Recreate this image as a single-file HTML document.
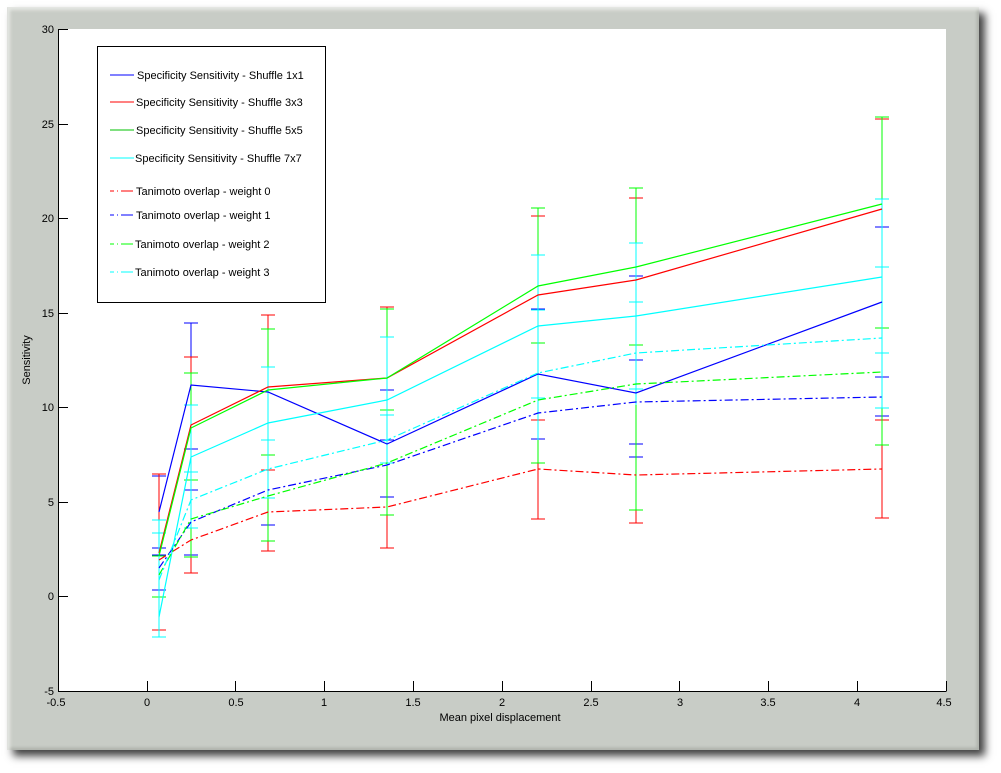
<!DOCTYPE html>
<html><head><meta charset="utf-8"><style>
body{margin:0;width:1001px;height:773px;background:#fff;overflow:hidden;position:relative;font-family:"Liberation Sans",sans-serif}
.frame{position:absolute;left:7px;top:7px;width:971px;height:742px;background:#c8ccc6;box-shadow:6px 6px 8px rgba(0,0,0,0.75),inset 2px 2px 3px #e6e8e4,inset -2px -2px 3px #a9ada7;border-top:1px solid #e4e6e2;border-left:1px solid #dfe1dd}
svg{position:absolute;left:0;top:0}
</style></head><body>
<div class="frame"></div>
<svg width="1001" height="773" font-family="Liberation Sans, sans-serif" font-size="11">
<rect x="58" y="29" width="888" height="662" fill="#fff"/>
<g stroke="#000" stroke-width="1" fill="none">
<path d="M58.5 29V691.5H946.5"/>
<path d="M58 29.5h10M58 124.5h10M58 218.5h10M58 313.5h10M58 407.5h10M58 502.5h10M58 596.5h10"/>
<path d="M58.5 691v-10M147.5 691v-10M235.5 691v-10M324.5 691v-10M413.5 691v-10M502.5 691v-10M591.5 691v-10M679.5 691v-10M768.5 691v-10M857.5 691v-10M946.5 691v-10"/>
</g>
<g text-anchor="end" fill="#000">
<text x="54" y="33">30</text><text x="54" y="128">25</text><text x="54" y="222">20</text><text x="54" y="317">15</text><text x="54" y="411">10</text><text x="54" y="506">5</text><text x="54" y="600">0</text><text x="54" y="695">-5</text>
</g>
<g text-anchor="middle" fill="#000">
<text x="56" y="706">-0.5</text><text x="147" y="706">0</text><text x="236" y="706">0.5</text><text x="324" y="706">1</text><text x="413" y="706">1.5</text><text x="502" y="706">2</text><text x="591" y="706">2.5</text><text x="680" y="706">3</text><text x="768" y="706">3.5</text><text x="857" y="706">4</text><text x="944" y="706">4.5</text>
<text x="500" y="721">Mean pixel displacement</text>
<text transform="translate(30 360) rotate(-90)">Sensitivity</text>
</g>
<g fill="none" stroke-width="1">
<path stroke="#0000ff" d="M159 476V548M152 476H166M152 548H166M191 323V449M184 323H198M184 449H198M387 390V497M380 390H394M380 497H394M538 309V439M531 309H545M531 439H545M636 276V457M629 276H643M629 457H643M882 227V377M875 227H889M875 377H889"/>
<path stroke="#ff0000" d="M159 474V630M152 474H166M152 630H166M191 357V573M184 357H198M184 573H198M268 315V551M261 315H275M261 551H275M387 307V548M380 307H394M380 548H394M538 216V519M531 216H545M531 519H545M636 198V523M629 198H643M629 523H643M882 119V518M875 119H889M875 518H889M268 470H275M261 470H275M538 420H545M531 420H545M882 420H889M875 420H889"/>
<path stroke="#0000ff" d="M159 555V590M152 555H166M152 590H166M191 490V555M184 490H198M184 555H198M268 455V525M261 455H275M261 525H275M387 440H394M380 440H394M636 360H643M629 360H643M636 444H643M629 444H643M882 416H889M875 416H889"/>
<path stroke="#00ff00" d="M159 556V597M152 556H166M152 597H166M191 373V557M184 373H198M184 557H198M268 329V541M261 329H275M261 541H275M387 309V515M380 309H394M380 515H394M538 208V463M531 208H545M531 463H545M636 188V510M629 188H643M629 510H643M882 117V445M875 117H889M875 445H889M191 480H198M184 480H198M268 455H275M261 455H275M387 410H394M380 410H394M538 343H545M531 343H545M636 345H643M629 345H643M882 328H889M875 328H889"/>
<path stroke="#00ffff" d="M159 520V637M152 533H166M152 637H166M152 520H166M191 405V528M184 405H198M184 528H198M184 472H198M268 367V498M261 367H275M261 498H275M261 440H275M387 337V466M380 337H394M380 463H394M380 415H394M538 255V440M531 255H545M531 398H545M531 310H545M636 243V405M629 243H643M629 389H643M629 302H643M882 199V408M875 199H889M875 353H889M875 267H889M875 408H889"/>
</g>
<g fill="none" stroke-width="1.2">
<polyline stroke="#0000ff" points="159,512 191,385 268,392 387,444 538,374 636,393 882,302"/>
<polyline stroke="#ff0000" points="159,553 191,425 268,387 387,378 538,295 636,280 882,209"/>
<polyline stroke="#00ff00" points="159,556 191,428 268,390 387,378 538,286 636,267 882,204"/>
<polyline stroke="#00ffff" points="159,617 191,457 268,423 387,400 538,326 636,316 882,277"/>
<g stroke-dasharray="8,3,2,3">
<polyline stroke="#ff0000" points="159,560 191,540 268,512 387,507 538,469 636,475 882,469"/>
<polyline stroke="#0000ff" points="159,568 191,522 268,490 387,465 538,413 636,402 882,397"/>
<polyline stroke="#00ff00" points="159,575 191,519 268,496 387,463 538,400 636,384 882,372"/>
<polyline stroke="#00ffff" points="159,580 191,500 268,469 387,440 538,373 636,353 882,338"/>
</g>
</g>
<rect x="97.5" y="46.5" width="228" height="256" fill="#fff" stroke="#000"/>
<g stroke-width="1" fill="none">
<path stroke="#0000ff" d="M110 75H134"/>
<path stroke="#ff0000" d="M110 102H134"/>
<path stroke="#00c000" d="M110 130H134"/>
<path stroke="#00ffff" d="M110 158H134"/>
<g stroke-dasharray="4,3,1,3,8,0">
<path stroke="#ff0000" d="M110 191H134"/>
<path stroke="#0000ff" d="M110 215H134"/>
<path stroke="#00ff00" d="M110 244H134"/>
<path stroke="#00ffff" d="M110 272H134"/>
</g>
</g>
<g fill="#000">
<text x="137" y="79">Specificity Sensitivity - Shuffle 1x1</text>
<text x="136" y="106">Specificity Sensitivity - Shuffle 3x3</text>
<text x="136" y="134">Specificity Sensitivity - Shuffle 5x5</text>
<text x="135" y="162">Specificity Sensitivity - Shuffle 7x7</text>
<text x="136" y="195">Tanimoto overlap - weight 0</text>
<text x="136" y="219">Tanimoto overlap - weight 1</text>
<text x="135" y="248">Tanimoto overlap - weight 2</text>
<text x="135" y="276">Tanimoto overlap - weight 3</text>
</g>
</svg>
</body></html>
